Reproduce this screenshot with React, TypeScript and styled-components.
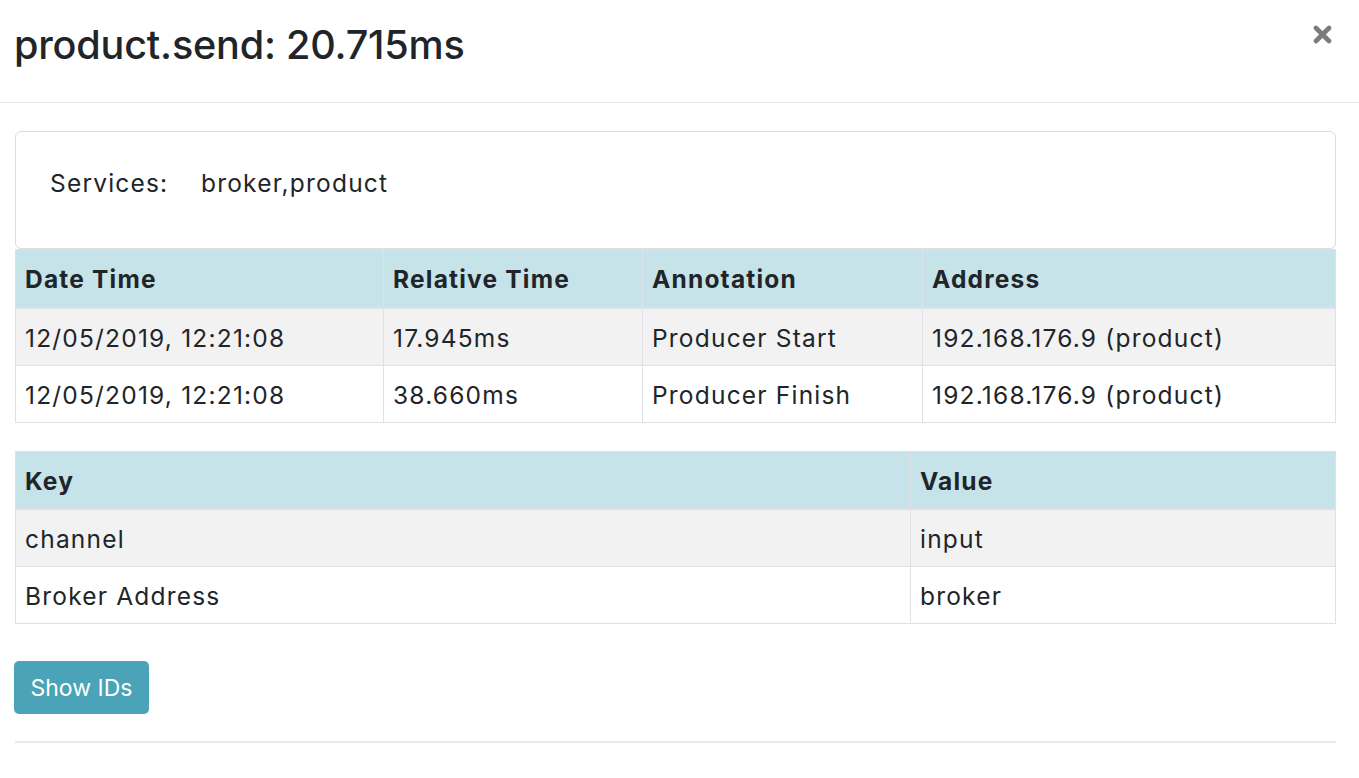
import React from "react";
import styled, { createGlobalStyle } from "styled-components";

const Global = createGlobalStyle`
  html, body { margin: 0; padding: 0; background: #ffffff; }
  body {
    font-family: Inter, "Liberation Sans", Arial, sans-serif;
    color: #212529;
    -webkit-font-smoothing: antialiased;
  }
`;

const Modal = styled.div`
  width: 1359px;
  background: #ffffff;
`;

const Header = styled.header`
  display: flex;
  justify-content: space-between;
  align-items: flex-start;
  height: 102px;
  box-sizing: content-box;
  padding: 0 27px 0 14px;
  border-bottom: 1px solid #e6e6e6;
`;

const Title = styled.h5`
  margin: 21px 0 0;
  font-size: 39.6px;
  line-height: 48px;
  font-weight: 500;
  letter-spacing: -0.2px;
`;

const CloseButton = styled.button`
  margin-top: 25px;
  padding: 0;
  border: 0;
  background: transparent;
  width: 19px;
  height: 19px;
  display: flex;
  cursor: pointer;
`;

const Body = styled.div`
  padding: 28px 23px 0 15px;
  display: flex;
  flex-direction: column;
`;

const Card = styled.div`
  height: 116px;
  box-sizing: content-box;
  border: 1px solid #dcdcdc;
  border-radius: 6px;
  display: grid;
  grid-template-columns: 151px auto;
  align-items: center;
  padding: 0 34px 0 34px;
  font-size: 24.5px;
  letter-spacing: 1.2px;
`;

const Label = styled.span`
  margin-bottom: 14px;
`;
const Value = styled.span`
  margin-bottom: 14px;
`;

const Table = styled.table<{ $gap?: number }>`
  width: 100%;
  table-layout: fixed;
  border-collapse: collapse;
  margin-top: ${(p) => p.$gap ?? 0}px;
  font-size: 24.5px;
  letter-spacing: 1.2px;
  border: 1px solid #dee2e6;
`;

const Th = styled.th`
  height: 58px;
  padding: 2px 9px 0;
  text-align: left;
  font-weight: 700;
  background: #c5e3e8;
  border: 1px solid #dee2e6;
  border-bottom: 2px solid #dee2e6;
  box-sizing: border-box;
`;

const Row = styled.tr<{ $striped?: boolean }>`
  background: ${(p) => (p.$striped ? "#f2f2f2" : "#ffffff")};
`;

const Td = styled.td`
  height: 54px;
  padding: 2px 9px 0;
  border: 1px solid #dee2e6;
  white-space: nowrap;
`;

const ShowButton = styled.button`
  align-self: flex-start;
  margin-top: 37px;
  margin-left: -1px;
  width: 135px;
  height: 53px;
  border: 0;
  border-radius: 5px;
  background: #4aa3b6;
  color: #ffffff;
  font-family: inherit;
  font-size: 23px;
  font-weight: 400;
  cursor: pointer;
`;

const Footer = styled.div`
  margin-top: 27px;
  border-top: 2px solid #e9e9e9;
  height: 34px;
`;

const annotations = [
  ["12/05/2019, 12:21:08", "17.945ms", "Producer Start", "192.168.176.9 (product)"],
  ["12/05/2019, 12:21:08", "38.660ms", "Producer Finish", "192.168.176.9 (product)"],
];

const tags = [
  ["channel", "input"],
  ["Broker Address", "broker"],
];

export default function App() {
  return (
    <Modal>
      <Global />
      <Header>
        <Title>product.send: 20.715ms</Title>
        <CloseButton aria-label="Close">
          <svg width="19" height="19" viewBox="0 0 19 19">
            <path
              d="M3 3 L16 16 M16 3 L3 16"
              stroke="#7b7b7b"
              strokeWidth="4.6"
              strokeLinecap="round"
            />
          </svg>
        </CloseButton>
      </Header>
      <Body>
        <Card>
          <Label>Services:</Label>
          <Value>broker,product</Value>
        </Card>
        <Table>
          <colgroup>
            <col style={{ width: 368 }} />
            <col style={{ width: 259 }} />
            <col style={{ width: 280 }} />
            <col />
          </colgroup>
          <thead>
            <tr>
              <Th>Date Time</Th>
              <Th>Relative Time</Th>
              <Th>Annotation</Th>
              <Th>Address</Th>
            </tr>
          </thead>
          <tbody>
            {annotations.map((r, i) => (
              <Row key={i} $striped={i % 2 === 0}>
                {r.map((c, j) => (
                  <Td key={j}>{c}</Td>
                ))}
              </Row>
            ))}
          </tbody>
        </Table>
        <Table $gap={28}>
          <colgroup>
            <col style={{ width: 895 }} />
            <col />
          </colgroup>
          <thead>
            <tr>
              <Th>Key</Th>
              <Th>Value</Th>
            </tr>
          </thead>
          <tbody>
            {tags.map((r, i) => (
              <Row key={i} $striped={i % 2 === 0}>
                {r.map((c, j) => (
                  <Td key={j}>{c}</Td>
                ))}
              </Row>
            ))}
          </tbody>
        </Table>
        <ShowButton>Show IDs</ShowButton>
        <Footer />
      </Body>
    </Modal>
  );
}
